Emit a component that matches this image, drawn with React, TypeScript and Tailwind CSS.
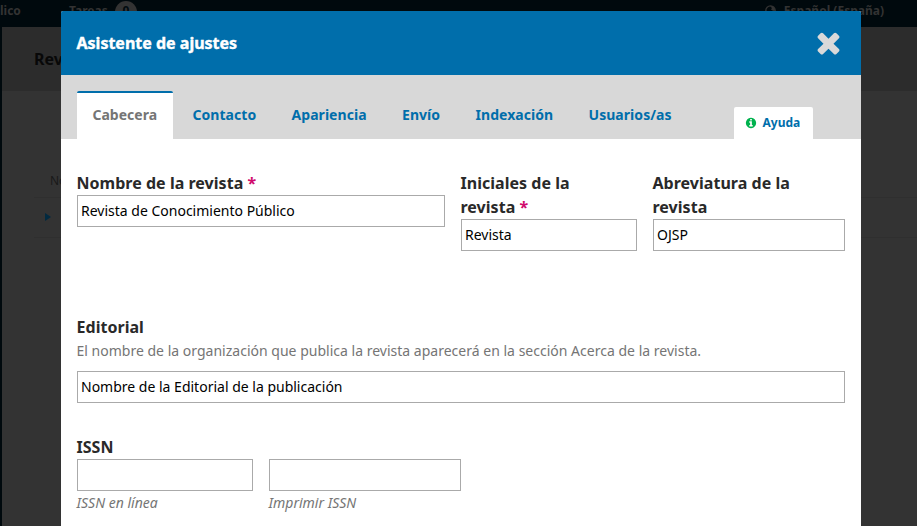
import type { ReactNode } from 'react';

const tabs = [
  { label: 'Contacto', width: 'w-[99px]' },
  { label: 'Apariencia', width: 'w-[110.5px]' },
  { label: 'Envío', width: 'w-[73.5px]' },
  { label: 'Indexación', width: 'w-[113px]' },
  { label: 'Usuarios/as', width: 'w-[116px]' },
];

function CloseIcon() {
  return (
    <svg viewBox="0 0 1792 1792" className="-mt-px h-[33px] w-[33px] fill-[#d9d9d9]">
      <path d="M1490 1322q0 40-28 68l-136 136q-28 28-68 28t-68-28l-294-294-294 294q-28 28-68 28t-68-28l-136-136q-28-28-28-68t28-68l294-294-294-294q-28-28-28-68t28-68l136-136q28-28 68-28t68 28l294 294 294-294q28-28 68-28t68 28l136 136q28 28 28 68t-28 68l-294 294 294 294q28 28 28 68z" />
    </svg>
  );
}

function InfoIcon() {
  return (
    <svg viewBox="0 0 1792 1792" className="h-3 w-3 fill-[#00b24e]">
      <path d="M1152 1376v-160q0-14-9-23t-23-9h-96v-512q0-14-9-23t-23-9h-320q-14 0-23 9t-9 23v160q0 14 9 23t23 9h96v320h-96q-14 0-23 9t-9 23v160q0 14 9 23t23 9h448q14 0 23-9t9-23zm-128-896v-160q0-14-9-23t-23-9h-192q-14 0-23 9t-9 23v160q0 14 9 23t23 9h192q14 0 23-9t9-23zm640 416q0 209-103 385.500t-279.500 279.500-385.500 103-385.500-103-279.500-279.500-103-385.500 103-385.500 279.500-279.500 385.500-103 385.500 103 279.500 279.500 103 385.500z" />
    </svg>
  );
}

function GlobeIcon() {
  return (
    <svg viewBox="0 0 11 11" className="mr-2 h-[11px] w-[11px]">
      <circle cx="5.5" cy="5.5" r="4.7" fill="none" stroke="#333" strokeWidth="1.3" />
      <path d="M5 1.2 L8 1 L10 4 L9.6 6 L7.6 5.6 L6 4.6 L7 3 Z M1.2 5.4 L3.6 6.8 L4.4 9.6 L2 8.6 Z" fill="#333" />
    </svg>
  );
}

function Label({ children, required }: { children: ReactNode; required?: boolean }) {
  return (
    <div className="-ml-[0.5px] text-base leading-6 font-bold tracking-[0.03px] text-[#292929]">
      {children}
      {required && <span className="text-[#d00a6c]">{'\u00a0*'}</span>}
    </div>
  );
}

function Input({ value }: { value?: string }) {
  return (
    <input
      defaultValue={value}
      className="block h-8 w-full border border-[#aaa] bg-white px-[3px] pb-0.5 text-sm text-black outline-none"
    />
  );
}

function Backdrop() {
  return (
    <div className="flex h-full flex-col bg-[#00090d]">
      <div className="flex h-[27px] shrink-0 items-start text-xs font-bold text-[#333]">
        <div className="w-[69px] leading-[21px]">lico</div>
        <div className="w-[46px] leading-[21px]">Tareas</div>
        <div className="mt-px h-[22px] w-[22px] rounded-full bg-[#333] text-center leading-[19px] text-[#000a0f]">0</div>
        <div className="ml-auto flex items-center pr-[33px]">
          <GlobeIcon />
          <span className="leading-[21px]">Español (España)</span>
        </div>
      </div>
      <div className="ml-0.5 h-16 shrink-0 bg-[#2c2c2c] pl-8 text-base leading-[64px] font-bold text-[#080808]">
        Rev
      </div>
      <div className="ml-0.5 grow bg-[#333] pt-[74px] pl-8">
        <div className="h-8 pl-4 text-xs leading-[32px] text-[#191919]">No</div>
        <div className="flex h-[41px] items-center border-y border-[#2f2f2f] pb-0.5 pl-[11px]">
          <div className="h-0 w-0 border-y-[4px] border-l-[6px] border-y-transparent border-l-[#022a40]" />
        </div>
      </div>
    </div>
  );
}

export default function App() {
  return (
    <div className="relative h-[526px] w-[917px] overflow-hidden font-['Noto_Sans',sans-serif]">
      <Backdrop />
      <div className="absolute top-[11px] left-[61px] h-[520px] w-[800px] rounded-t-[2px] bg-white">
        <header className="flex h-16 items-center justify-between rounded-t-[2px] bg-[#006eab] pr-4 pl-[15.5px]">
          <h1 className="text-base leading-6 font-bold text-white [-webkit-text-stroke:0.4px_white]">Asistente de ajustes</h1>
          <CloseIcon />
        </header>
        <nav className="flex h-16 items-end bg-[#d8d8d8] px-4 text-sm font-bold text-[#006eab]">
          <div className="h-12 w-24 rounded-t-[2px] border-t-2 border-[#006eab] bg-white pl-[15.5px] leading-[44px] text-[#757575]">
            Cabecera
          </div>
          <div className="ml-[19.5px] flex h-12 items-center tracking-[0.05px]">
            {tabs.map((tab) => (
              <div key={tab.label} className={tab.width}>{tab.label}</div>
            ))}
          </div>
          <div className="mr-8 ml-auto flex h-8 w-[79px] items-center gap-[5.5px] rounded-t-[2px] bg-white pl-[11px] text-xs">
            <InfoIcon />
            <span>Ayuda</span>
          </div>
        </nav>
        <form className="px-4 pt-8">
          <div className="flex h-36 gap-4">
            <div className="w-[368px]">
              <Label required>Nombre de la revista</Label>
              <Input value="Revista de Conocimiento Público" />
            </div>
            <div className="w-44">
              <Label required>Iniciales de la revista</Label>
              <Input value="Revista" />
            </div>
            <div className="w-48">
              <Label>Abreviatura de la revista</Label>
              <Input value="OJSP" />
            </div>
          </div>
          <div className="h-[120px]">
            <Label>Editorial</Label>
            <p className="-ml-[0.5px] mb-2 text-sm leading-6 tracking-[0.01px] text-[#757575]">
              El nombre de la organización que publica la revista aparecerá en la sección Acerca de la revista.
            </p>
            <Input value="Nombre de la Editorial de la publicación" />
          </div>
          <Label>ISSN</Label>
          <div className="flex gap-4 text-sm leading-6 text-[#757575] italic">
            <div className="w-44">
              <Input />
              <span className="-ml-[0.5px]">ISSN en línea</span>
            </div>
            <div className="w-48">
              <Input />
              <span className="-ml-[0.5px]">Imprimir ISSN</span>
            </div>
          </div>
        </form>
      </div>
    </div>
  );
}
